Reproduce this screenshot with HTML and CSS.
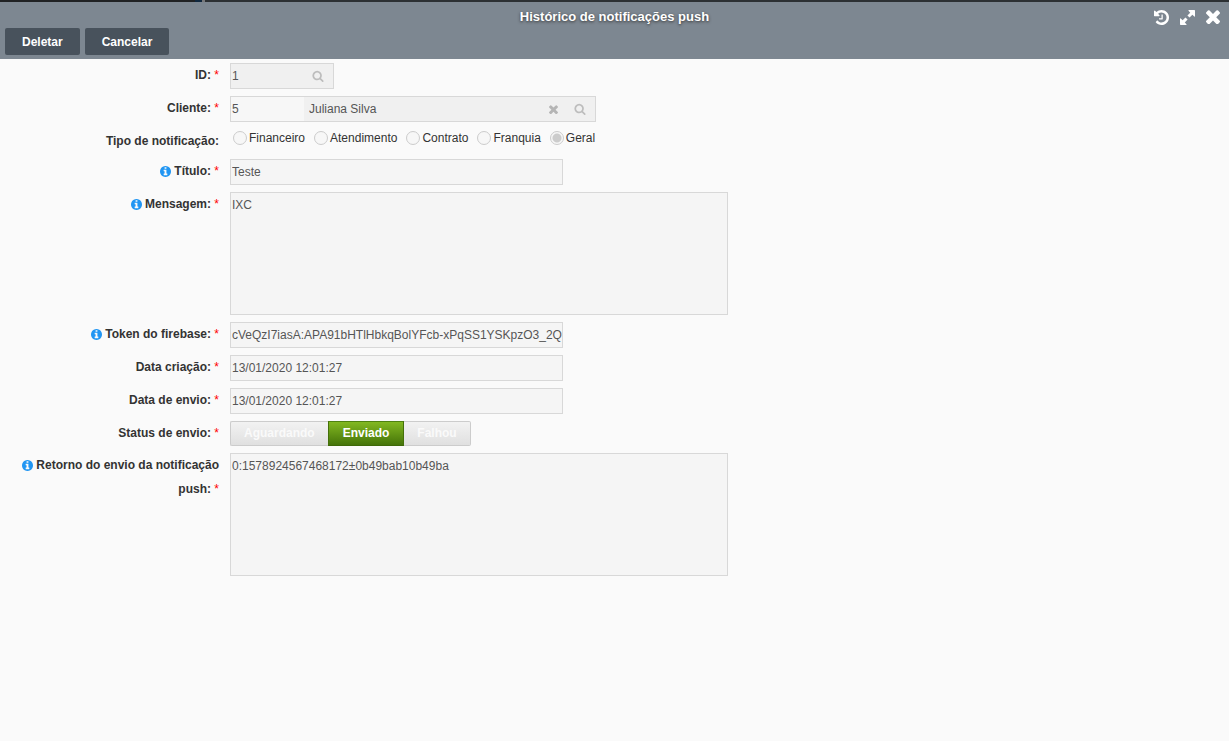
FILE: index.html
```html
<!DOCTYPE html>
<html lang="pt-BR">
<head>
<meta charset="utf-8">
<title>Histórico de notificações push</title>
<link rel="stylesheet" href="styles.css">
</head>
<body>
<svg class="sprite" aria-hidden="true">
  <symbol id="search" viewBox="0 0 1792 1792"><path d="M1216 832q0-185-131.500-316.500t-316.500-131.500-316.500 131.500-131.500 316.500 131.500 316.500 316.500 131.500 316.500-131.500 131.500-316.500zm512 832q0 52-38 90t-90 38q-54 0-90-38l-343-342q-179 124-399 124-143 0-273.500-55.500t-225-150-150-225-55.500-273.500 55.500-273.500 150-225 225-150 273.500-55.500 273.500 55.500 225 150 150 225 55.500 273.500q0 220-124 399l343 343q37 37 37 90z"/></symbol>
  <symbol id="times" viewBox="302 302 1188 1188"><path transform="translate(0 -42)" d="M1490 1322q0 40-28 68l-136 136q-28 28-68 28t-68-28l-294-294-294 294q-28 28-68 28t-68-28l-136-136q-28-28-28-68t28-68l294-294-294-294q-28-28-28-68t28-68l136-136q28-28 68-28t68 28l294 294 294-294q28-28 68-28t68 28l136 136q28 28 28 68t-28 68l-294 294 294 294q28 28 28 68z"/></symbol>
  <symbol id="info" viewBox="128 128 1536 1536"><path d="M1152 1376v-160q0-14-9-23t-23-9h-96v-512q0-14-9-23t-23-9h-320q-14 0-23 9t-9 23v160q0 14 9 23t23 9h96v320h-96q-14 0-23 9t-9 23v160q0 14 9 23t23 9h448q14 0 23-9t9-23zm-128-896v-160q0-14-9-23t-23-9h-192q-14 0-23 9t-9 23v160q0 14 9 23t23 9h192q14 0 23-9t9-23zm640 416q0 209-103 385.500t-279.500 279.500-385.500 103-385.500-103-279.500-279.500-103-385.500 103-385.500 279.500-279.500 385.500-103 385.500 103 279.500 279.500 103 385.500z"/></symbol>
  <symbol id="history" viewBox="128 128 1536 1536"><path d="M1664 896q0 156-61 298t-164 245-245 164-298 61q-172 0-327-72.500t-264-204.500q-7-10-6.500-22.500t8.500-20.500l137-138q10-9 25-9 16 2 23 12 73 95 179 147t225 52q104 0 198.500-40.500t163.500-109.500 109.500-163.500 40.500-198.500-40.500-198.500-109.500-163.500-163.500-109.500-198.500-40.500q-98 0-188 35.500t-160 101.500l137 138q31 30 14 69-17 40-59 40h-448q-26 0-45-19t-19-45v-448q0-42 40-59 39-17 69 14l130 129q107-101 244.500-156.500t284.500-55.500q156 0 298 61t245 164 164 245 61 298zm-640-288v448q0 14-9 23t-23 9h-320q-14 0-23-9t-9-23v-64q0-14 9-23t23-9h224v-352q0-14 9-23t23-9h64q14 0 23 9t9 23z"/></symbol>
  <symbol id="expand" viewBox="0 0 16 16"><path d="M9.500 0H15.300q.7 0 .7.700V6.500q0 .9-.8.400L13.200 5.100 10.200 8.100 7.900 5.800 10.900 2.800 9.100.8q-.5-.8.400-.8zM6.500 16H.7Q0 16 0 15.300V9.500q0-.9.800-.4L2.800 10.900 5.800 7.900 8.100 10.200 5.100 13.200 6.900 15.200q.5.8-.4.800z"/></symbol>
</svg>
<div class="strip"></div>
<header class="header">
  <div class="titlebar">
    <h1 class="title">Histórico de notificações push</h1>
    <div class="tools">
      <button class="tool" type="button" aria-label="Histórico"><svg><use href="#history"/></svg></button>
      <button class="tool" type="button" aria-label="Expandir"><svg><use href="#expand"/></svg></button>
      <button class="tool" type="button" aria-label="Fechar"><svg class="close"><use href="#times"/></svg></button>
    </div>
  </div>
  <div class="actions">
    <button class="action" type="button">Deletar</button>
    <button class="action" type="button">Cancelar</button>
  </div>
</header>
<main>
<form class="form">
  <div class="row">
    <label class="label" for="id">ID: <span class="req">*</span></label>
    <div class="lookup lookup-short">
      <input class="code dark" id="id" value="1" readonly>
      <button class="icon-btn" type="button" aria-label="Pesquisar"><svg><use href="#search"/></svg></button>
    </div>
  </div>
  <div class="row">
    <label class="label" for="cliente">Cliente: <span class="req">*</span></label>
    <div class="lookup lookup-long">
      <input class="code" id="cliente" value="5" readonly>
      <input class="name" value="Juliana Silva" aria-label="Nome do cliente" readonly>
      <button class="icon-btn clear" type="button" aria-label="Limpar"><svg><use href="#times"/></svg></button>
      <button class="icon-btn" type="button" aria-label="Pesquisar"><svg><use href="#search"/></svg></button>
    </div>
  </div>
  <div class="row row-radio" role="radiogroup" aria-labelledby="tipo">
    <span class="label" id="tipo">Tipo de notificação:</span>
    <div class="radios">
      <label class="radio"><input type="radio" name="tipo">Financeiro</label>
      <label class="radio"><input type="radio" name="tipo">Atendimento</label>
      <label class="radio"><input type="radio" name="tipo">Contrato</label>
      <label class="radio"><input type="radio" name="tipo">Franquia</label>
      <label class="radio"><input type="radio" name="tipo" checked>Geral</label>
    </div>
  </div>
  <div class="row">
    <label class="label" for="titulo"><svg class="info"><use href="#info"/></svg> Título: <span class="req">*</span></label>
    <input class="field" id="titulo" value="Teste" readonly>
  </div>
  <div class="row">
    <label class="label" for="mensagem"><svg class="info"><use href="#info"/></svg> Mensagem: <span class="req">*</span></label>
    <textarea class="field area" id="mensagem" readonly>IXC</textarea>
  </div>
  <div class="row">
    <label class="label" for="token"><svg class="info"><use href="#info"/></svg> Token do firebase: <span class="req">*</span></label>
    <input class="field" id="token" value="cVeQzI7iasA:APA91bHTlHbkqBolYFcb-xPqSS1YSKpzO3_2Q" readonly>
  </div>
  <div class="row">
    <label class="label" for="criacao">Data criação: <span class="req">*</span></label>
    <input class="field" id="criacao" value="13/01/2020 12:01:27" readonly>
  </div>
  <div class="row">
    <label class="label" for="envio">Data de envio: <span class="req">*</span></label>
    <input class="field" id="envio" value="13/01/2020 12:01:27" readonly>
  </div>
  <div class="row" role="group" aria-labelledby="status">
    <span class="label" id="status">Status de envio: <span class="req">*</span></span>
    <div class="segments">
      <button class="segment" type="button">Aguardando</button>
      <button class="segment on" type="button" aria-pressed="true">Enviado</button>
      <button class="segment" type="button">Falhou</button>
    </div>
  </div>
  <div class="row">
    <label class="label" for="retorno"><svg class="info"><use href="#info"/></svg> Retorno do envio da notificação push: <span class="req">*</span></label>
    <textarea class="field area" id="retorno" readonly>0:1578924567468172±0b49bab10b49ba</textarea>
  </div>
</form>
</main>
</body>
</html>
```

FILE: styles.css
```css
* { box-sizing: border-box; }
body {
  margin: 0;
  background: #fafafa;
  color: #333;
  font: 12px "Liberation Sans", Arial, sans-serif;
}
button, input, textarea { font: inherit; margin: 0; border-radius: 0; }
button { border: 0; padding: 0; background: none; }
svg { display: block; fill: currentColor; }
.sprite { display: none; }
.strip {
  height: 2px;
  background: linear-gradient(90deg, #202224 0 195px, #10283f 195px 202px, #77787a 202px 205px, #2c3033 205px);
}

.header { background: #7d8791; padding-bottom: 4px; }
.titlebar {
  display: grid;
  grid-template-columns: 1fr auto 1fr;
  align-items: center;
  height: 26px;
  padding: 2px 9px 0;
}
.title {
  grid-column: 2;
  margin: 0;
  color: #fff;
  font-size: 13px;
  line-height: 26px;
  text-shadow: 0 1px 3px #333;
}
.tools { display: flex; align-items: center; justify-content: flex-end; gap: 11px; color: #fff; }
.tool { color: inherit; }
.tool svg { width: 15px; height: 15px; }
.tool .close { width: 14px; height: 14px; }
.actions { display: flex; gap: 5px; padding: 0 5px; }
.action {
  height: 27px;
  padding: 0 17px;
  border-radius: 2px;
  background: #48525c;
  color: #fff;
  font-weight: bold;
}

.form { display: flex; flex-direction: column; gap: 7px; padding: 4px 0; }
.row { display: flex; align-items: flex-start; gap: 11px; }
.row-radio { height: 23px; }
.label {
  width: 219px;
  padding-left: 20px;
  font-weight: bold;
  line-height: 24px;
  text-align: right;
}
.req { color: #f00; font-weight: normal; }
.info { display: inline-block; width: 11px; height: 11px; vertical-align: -2px; color: #2196f3; }

.field {
  display: block;
  width: 333px;
  height: 26px;
  padding: 0 0 0 1px;
  border: 1px solid #d8d8d8;
  background: #f5f5f5;
  color: #555;
  outline: 0;
}
.area { width: 498px; height: 123px; padding-top: 5px; line-height: 14px; resize: none; }

.lookup { display: flex; height: 26px; border: 1px solid #d8d8d8; background: #f0f0f0; }
.lookup-short { width: 104px; }
.lookup-long { width: 366px; }
.lookup input { min-width: 0; border: 0; padding: 0 0 0 1px; background: none; color: #555; outline: 0; }
.lookup .code { width: 73px; background: #f7f7f7; }
.lookup .dark { background: none; }
.lookup .name { flex: 1; padding-left: 5px; }
.icon-btn { display: flex; align-items: center; justify-content: center; width: 30px; color: #bdbdbd; }
.icon-btn svg { width: 12px; height: 12px; }
.clear { width: 24px; }
.clear svg { width: 9px; height: 9px; color: #b5b5b5; }

.radios { display: flex; gap: 9px; padding-left: 3px; }
.radio { display: flex; align-items: center; gap: 2px; line-height: 18px; }
.radio input {
  appearance: none;
  width: 14px;
  height: 14px;
  margin: 0;
  border: 1px solid #ccc;
  border-radius: 50%;
  background: #f7f7f7;
}
.radio input:checked { background: radial-gradient(circle, #ccc 4px, #f7f7f7 5px); }

.segments { display: flex; height: 25px; }
.segment {
  padding: 0 13px 1px;
  border: 1px solid #ccc;
  background: linear-gradient(#f2f2f2, #e0e0e0);
  color: #fafafa;
  font-weight: bold;
}
.segment:first-child { border-right: 0; border-radius: 2px 0 0 2px; }
.segment:last-child { border-left: 0; border-radius: 0 2px 2px 0; }
.segment.on {
  padding: 0 14px 1px;
  border-color: #4f8210 #447009 #3e6808;
  background: linear-gradient(#82b821, #457409);
  color: #fff;
}
```
